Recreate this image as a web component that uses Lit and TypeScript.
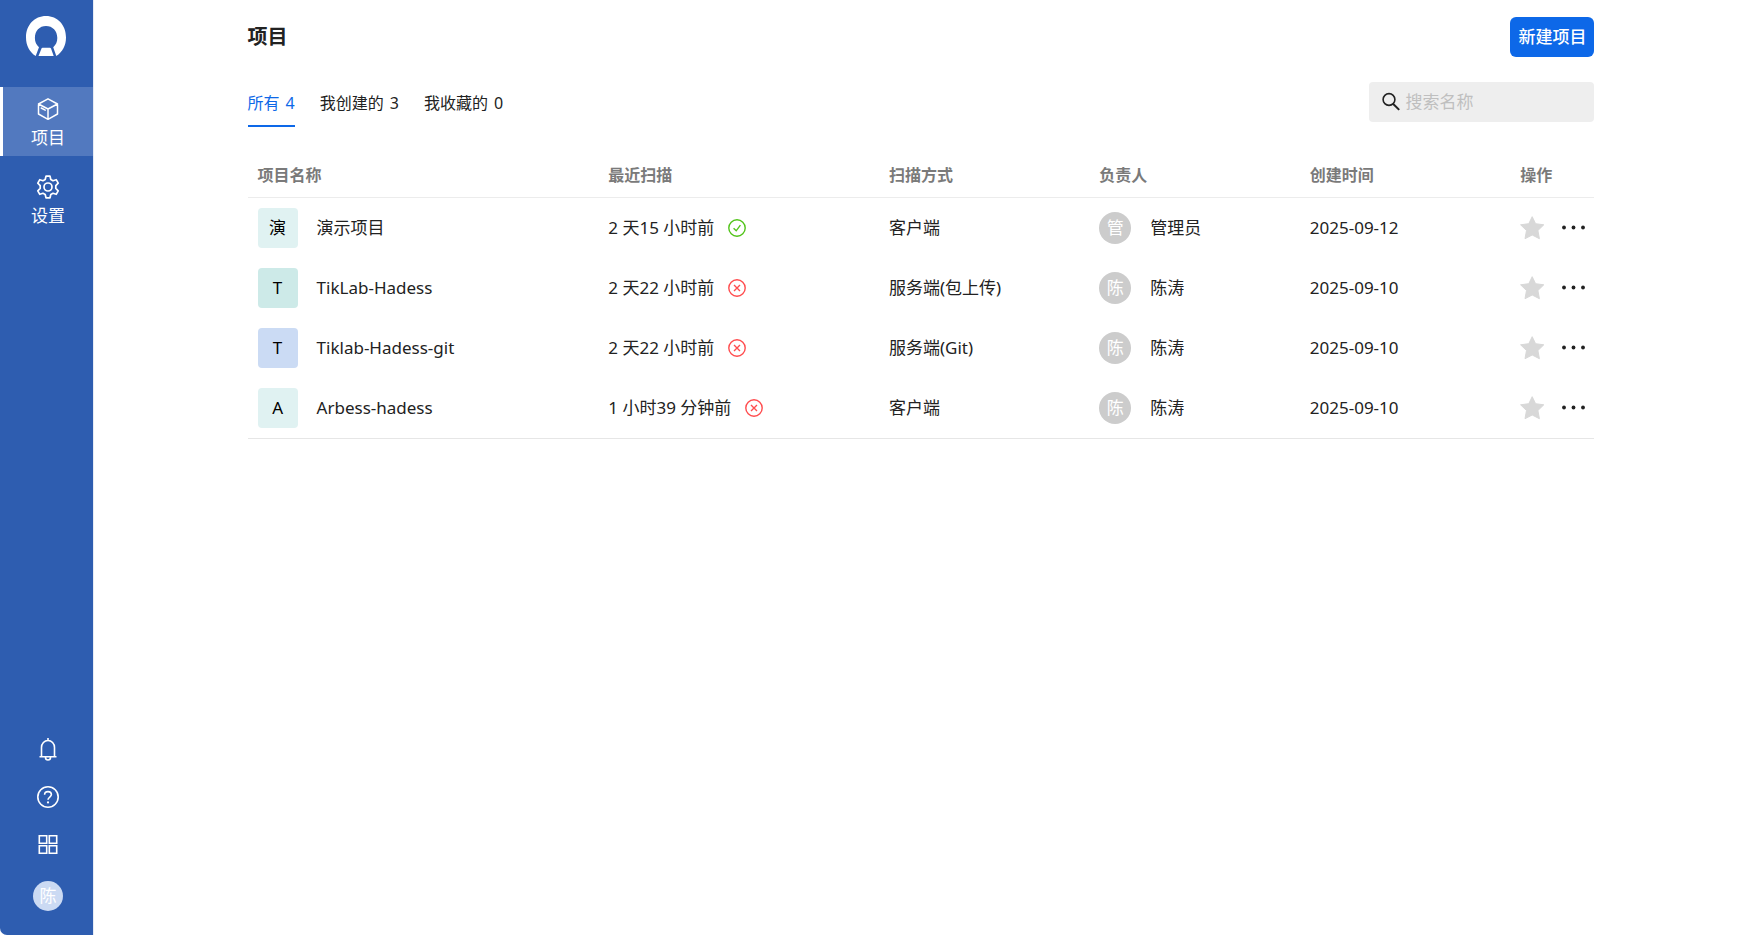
import { LitElement, html, css, svg } from "lit";
import { customElement, state } from "lit/decorators.js";

type Project = {
  initial: string;
  name: string;
  tone: "mint" | "teal" | "blue";
  scanned: string;
  passed: boolean;
  mode: string;
  owner: string;
  created: string;
};

const projects: Project[] = [
  { initial: "演", name: "演示项目", tone: "mint", scanned: "2 天15 小时前", passed: true, mode: "客户端", owner: "管理员", created: "2025-09-12" },
  { initial: "T", name: "TikLab-Hadess", tone: "teal", scanned: "2 天22 小时前", passed: false, mode: "服务端(包上传)", owner: "陈涛", created: "2025-09-10" },
  { initial: "T", name: "Tiklab-Hadess-git", tone: "blue", scanned: "2 天22 小时前", passed: false, mode: "服务端(Git)", owner: "陈涛", created: "2025-09-10" },
  { initial: "A", name: "Arbess-hadess", tone: "mint", scanned: "1 小时39 分钟前", passed: false, mode: "客户端", owner: "陈涛", created: "2025-09-10" },
];

const tabs = [
  { label: "所有", count: 4 },
  { label: "我创建的", count: 3 },
  { label: "我收藏的", count: 0 },
];

const base = css`
  * { box-sizing: border-box; }
  button, input { font: inherit; color: inherit; }
  button { padding: 0; border: 0; background: none; cursor: pointer; }
  a { color: inherit; text-decoration: none; }
  svg { display: block; flex: none; }
`;

@customElement("side-nav")
export class SideNav extends LitElement {
  static styles = [
    base,
    css`
      :host {
        display: flex;
        flex-direction: column;
        width: 94px;
        flex: none;
        background: #2e5db0;
        border-right: 1px solid #e6ebf5;
        border-bottom-left-radius: 7px;
        color: #fff;
      }
      .logo { padding: 16px 0 31px 26px; }
      .menu { display: flex; flex-direction: column; gap: 9px; }
      .item {
        display: flex;
        flex-direction: column;
        align-items: center;
        gap: 5px;
        padding: 10px 0 6px;
        border-left: 3px solid transparent;
        line-height: 24px;
      }
      .item.active { background: #5279bf; border-left-color: #fff; }
      .tools {
        display: flex;
        flex-direction: column;
        align-items: center;
        gap: 24px;
        margin-top: auto;
        padding: 0 0 24px 3px;
      }
      .user {
        width: 30px;
        height: 30px;
        border-radius: 50%;
        background: #cbdaf3;
        line-height: 30px;
      }
    `,
  ];

  render() {
    return html`
      <a class="logo" href="#" aria-label="首页">
        <svg width="40" height="40" viewBox="0 0 40 40" fill="#fff">
          <path d="M9.700 40C3.500 36 0 29.500 0 21.500 0 9 8.500 0 20 0s20 9 20 21.500c0 8-3.500 14.500-9.700 18.500L27.200 31.200c2.700-2.300 4.100-5.400 4.100-9.200 0-7.200-4.800-12-11.300-12S8.900 14.800 8.900 22c0 3.800 1.400 6.900 4.100 9.200z" />
          <path d="M17 31.700h6.500c.900 0 1.300.300 1.600 1L27.700 40H12.500l2.900-7.300c.3-.7.7-1 1.600-1z" />
        </svg>
      </a>
      <nav class="menu">
        <a class="item active" href="#projects">
          <svg width="24" height="24" viewBox="0 0 24 24" fill="none" stroke="#fff" stroke-width="1.500" stroke-linejoin="round" stroke-linecap="round">
            <path d="M12 1.800 21.500 7v10L12 22.300 2.500 17V7zM2.500 7 12 12l9.500-5M12 12v10.300M5.200 11l4 2.200" />
          </svg>
          <span>项目</span>
        </a>
        <a class="item" href="#settings">
          <svg width="24" height="24" viewBox="0 0 24 24" fill="none" stroke="#fff" stroke-width="1.700" stroke-linejoin="round">
            <path d="M10 1.200h4l.8 3.300 2.200 1.200 3.200-1 2 3.500-2.400 2.400v2.800l2.400 2.400-2 3.500-3.200-1-2.200 1.200-.8 3.300h-4l-.8-3.300L7 18.300l-3.200 1-2-3.500 2.400-2.400v-2.800L1.800 8.200l2-3.500 3.200 1 2.200-1.200z" />
            <circle cx="12" cy="12" r="4" />
          </svg>
          <span>设置</span>
        </a>
      </nav>
      <div class="tools">
        <button aria-label="通知">
          <svg width="24" height="24" viewBox="0 0 24 24" fill="none" stroke="#fff" stroke-width="1.600">
            <path d="M12 1v2.500M5.500 19.500V10.500a6.500 7 0 0 1 13 0v9M3.500 19.700h17M9.500 20.500a2.500 2.500 0 0 0 5 0" />
          </svg>
        </button>
        <button aria-label="帮助">
          <svg width="24" height="24" viewBox="0 0 24 24" fill="none" stroke="#fff" stroke-width="1.600">
            <circle cx="12" cy="12" r="10.200" />
            <path d="M8.600 9.800c0-2 1.500-3.200 3.400-3.200s3.400 1.200 3.400 3c0 2.400-3.400 2.500-3.400 5.200" />
            <circle cx="12" cy="17.400" r="1.100" fill="#fff" stroke="none" />
          </svg>
        </button>
        <button aria-label="应用">
          <svg width="24" height="24" viewBox="0 0 24 24" fill="none" stroke="#fff" stroke-width="1.600">
            <path d="M3.300 2.800h7.400v7.400H3.300zM13.300 2.800h7.400v7.400h-7.400zM3.300 12.800h7.400v7.400H3.300zM13.300 12.800h7.400v7.400h-7.400z" />
          </svg>
        </button>
        <button class="user" aria-label="陈涛">陈</button>
      </div>
    `;
  }
}

@customElement("project-table")
export class ProjectTable extends LitElement {
  static styles = [
    base,
    css`
      :host { display: block; }
      .table { width: 100%; table-layout: fixed; border-collapse: separate; border-spacing: 0; }
      .w-name { width: 25%; }
      .w-scan { width: 20%; }
      .w-col { width: 15%; }
      .w-act { width: 6%; }
      .th {
        height: 46px;
        padding: 0 10px;
        border-bottom: 1px solid #ececec;
        color: #7a7a7a;
        font-size: 16px;
        font-weight: 700;
        text-align: left;
      }
      .td { height: 60px; padding: 0 10px; white-space: nowrap; }
      .row:last-child .td { height: 61px; border-bottom: 1px solid #e6e6e6; }
      .cell { display: flex; align-items: center; gap: 19px; }
      .cell.status { gap: 14px; }
      .cell.actions { gap: 16px; }
      .badge {
        width: 40px;
        height: 40px;
        border-radius: 4px;
        color: #000;
        line-height: 40px;
        text-align: center;
      }
      .mint { background: #e0f2f2; }
      .teal { background: #cdeae8; }
      .blue { background: #cbdbf4; }
      .avatar {
        width: 32px;
        height: 32px;
        border-radius: 50%;
        background: #ccc;
        color: #fff;
        line-height: 32px;
        text-align: center;
      }
    `,
  ];

  private statusIcon(passed: boolean) {
    const color = passed ? "#52c41a" : "#ff4d4f";
    return html`<svg width="18" height="18" viewBox="0 0 18 18" fill="none" stroke=${color} stroke-width="1.400" role="img" aria-label=${passed ? "成功" : "失败"}>
      <circle cx="9" cy="9" r="8.200" />
      ${passed ? svg`<path d="M5.600 9.200 8.200 11.800 12.400 6.200" />` : svg`<path d="M6 6l6 6M12 6l-6 6" />`}
    </svg>`;
  }

  render() {
    return html`
      <table class="table">
        <colgroup>
          <col class="w-name" /><col class="w-scan" /><col class="w-col" /><col class="w-col" /><col class="w-col" /><col class="w-act" />
        </colgroup>
        <thead>
          <tr>
            ${["项目名称", "最近扫描", "扫描方式", "负责人", "创建时间", "操作"].map((t) => html`<th class="th" scope="col">${t}</th>`)}
          </tr>
        </thead>
        <tbody>
          ${projects.map(
            (p) => html`<tr class="row">
              <td class="td"><div class="cell"><span class="badge ${p.tone}">${p.initial}</span><a href="#project">${p.name}</a></div></td>
              <td class="td"><div class="cell status"><span>${p.scanned}</span>${this.statusIcon(p.passed)}</div></td>
              <td class="td">${p.mode}</td>
              <td class="td"><div class="cell"><span class="avatar">${p.owner[0]}</span><span>${p.owner}</span></div></td>
              <td class="td">${p.created}</td>
              <td class="td">
                <div class="cell actions">
                  <button aria-label="收藏">
                    <svg width="25" height="24" viewBox="0 0 25 24" fill="#d8d8d8" stroke="#d8d8d8" stroke-linejoin="round">
                      <path d="M12.200.700l3.400 7 8.200 1.100-5.900 5.700 1.500 8.200-7.200-3.700L5 22.700l1.500-8.200L.6 8.800l8.200-1.100z" />
                    </svg>
                  </button>
                  <button aria-label="更多">
                    <svg width="25" height="24" viewBox="0 0 25 24" fill="#222">
                      <circle cx="3" cy="11.500" r="1.900" /><circle cx="12.500" cy="11.500" r="1.900" /><circle cx="22" cy="11.500" r="1.900" />
                    </svg>
                  </button>
                </div>
              </td>
            </tr>`,
          )}
        </tbody>
      </table>
    `;
  }
}

@customElement("app-root")
export class AppRoot extends LitElement {
  @state() private active = 0;

  static styles = [
    base,
    css`
      :host {
        display: flex;
        min-height: 100vh;
        background: #fff;
        color: #222;
        font-family: "Noto Sans", "Noto Sans CJK SC", sans-serif;
        font-size: 17px;
        line-height: 24px;
      }
      .main { flex: 1; min-width: 0; }
      .content { width: 83.333%; margin: 0 auto; padding: 17px 13px 0 16px; }
      .head { display: flex; align-items: center; justify-content: space-between; }
      .title { margin: 0; font-size: 20px; line-height: 40px; font-weight: 700; }
      .create {
        height: 40px;
        padding: 0 8px;
        border-radius: 6px;
        background: #0d68e8;
        color: #fff;
        font-weight: 500;
      }
      .bar { display: flex; justify-content: space-between; margin: 25px 0; }
      .tabs { display: flex; gap: 25px; font-size: 16px; }
      .tab {
        display: flex;
        align-items: center;
        gap: 6px;
        height: 45px;
        padding-bottom: 2px;
        border-bottom: 2px solid transparent;
      }
      .tab.active { color: #0d68e8; border-bottom-color: #0d68e8; }
      .search {
        display: flex;
        align-items: center;
        gap: 4px;
        width: 225px;
        height: 40px;
        padding: 0 12px;
        border-radius: 4px;
        background: #eee;
      }
      .field { flex: 1; min-width: 0; padding: 0; border: 0; outline: 0; background: none; }
      .field::placeholder { color: #bfbfbf; opacity: 1; }
    `,
  ];

  render() {
    return html`
      <side-nav></side-nav>
      <main class="main">
        <div class="content">
          <header class="head">
            <h1 class="title">项目</h1>
            <button class="create">新建项目</button>
          </header>
          <div class="bar">
            <div class="tabs" role="tablist">
              ${tabs.map(
                (t, i) => html`<button class="tab ${i === this.active ? "active" : ""}" role="tab" aria-selected=${i === this.active} @click=${() => (this.active = i)}><span>${t.label}</span><span>${t.count}</span></button>`,
              )}
            </div>
            <label class="search">
              <svg width="20" height="20" viewBox="0 0 20 20" fill="none" stroke="#222" stroke-width="1.600">
                <circle cx="8" cy="7.500" r="5.900" /><path d="M12 11.700 18.200 17.900" stroke-width="2" />
              </svg>
              <input class="field" type="text" placeholder="搜索名称" aria-label="搜索名称" />
            </label>
          </div>
          <project-table></project-table>
        </div>
      </main>
    `;
  }
}
